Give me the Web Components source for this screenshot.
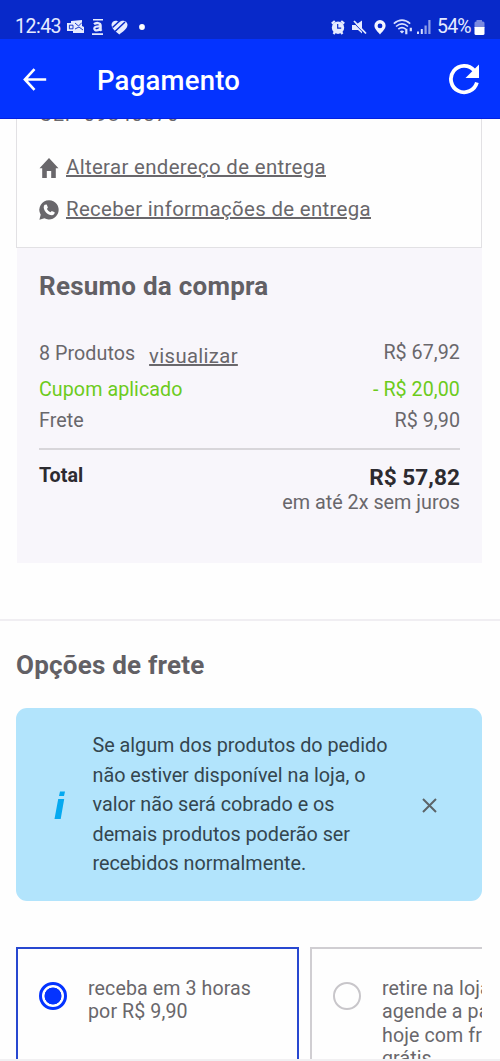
<!DOCTYPE html>
<html lang="pt-BR">
<head>
<meta charset="utf-8">
<title>Pagamento</title>
<style>
html,body{margin:0;height:100%}
body{font-family:Roboto,"Liberation Sans",sans-serif;background:#fefefe;color:#69676b;overflow:hidden}
</style>
</head>
<body>
<payment-screen></payment-screen>
<script>
const define = (name, html) => {
  const t = document.createElement('template');
  t.innerHTML = html;
  customElements.define(name, class extends HTMLElement {
    constructor() {
      super();
      this.attachShadow({mode: 'open'}).append(t.content.cloneNode(true));
    }
  });
};

define('status-bar', `<style>
:host{display:flex;box-sizing:border-box;height:39px;padding:14px 15px 0 15px;background:#0829c9;color:#e6ebff;font-size:19.5px;line-height:26px;justify-content:space-between}
div{display:flex;align-items:center;height:26px}
svg{display:block;flex:none}
.l span{width:46px;letter-spacing:-.5px;margin-right:6px}
.r span{letter-spacing:-.8px;width:37px;margin-left:6px}
</style>
<div class="l"><span>12:43</span>
<svg width="17" height="14" viewBox="0 0 17 14" fill="#e6ebff"><path d="M0 3h4V1l11-1v6l2 1v6H6v-2H0z"/><path d="M2.400 5.200h3.600v3.600h-3.600zM8 3l3.500 3L15 2.500M8 9l4-2 4 3" fill="none" stroke="#0829c9" stroke-width=".9"/></svg>
<svg width="12" height="18" viewBox="0 0 12 18" fill="#e6ebff" style="margin-left:7.500px"><path d="M1 1h10v1.500H1zM0 15.200h11V17H0z"/><path d="M2 6.200C4 4.400 8.600 4.500 8.600 7.500v4.200l1 1M8.300 8.500C4.600 8.200 2.300 8.800 2.300 10.600c0 2.600 4.600 2.300 6-.2" fill="none" stroke="#e6ebff" stroke-width="2.300"/></svg>
<svg width="17" height="15" viewBox="0 0 17 15" style="margin-left:7px"><path d="M8.300 14.500C5.500 12 .5 9 .5 4.800C.5 1 5.500-.8 8.300 2.300C11-.8 16.500 1 16.500 4.800C16.500 9 11.200 12 8.300 14.500z" fill="#e6ebff"/><path d="M1.500 7.500 8 1.500M4 11.500 14 2" stroke="#0829c9" stroke-width="1.500"/></svg>
<svg width="6" height="6" style="margin-left:11.500px"><circle cx="3" cy="3" r="2.900" fill="#fff"/></svg></div>
<div class="r">
<svg width="14" height="15" viewBox="0 0 14 15"><circle cx="7" cy="7.700" r="6.200" fill="#e6ebff"/><path d="M.8 3.600 3.800 1M13.200 3.600 10.200 1M2.500 14l1.500-2M11.500 14 10 12" stroke="#e6ebff" stroke-width="2.200"/><path d="M6.700 4v4.200h3.500" fill="none" stroke="#0829c9" stroke-width="1.200"/></svg>
<svg width="15" height="15" viewBox="0 0 15 15" style="margin-left:7px"><path d="M0 5h3.500L10 .5v13L6 10H0z" fill="#e6ebff"/><path d="M.8 1.800 13 14.300" stroke="#0829c9" stroke-width="1"/><path d="M2 1 14 13.500" stroke="#e6ebff" stroke-width="1.800"/></svg>
<svg width="12" height="15" viewBox="0 0 12 15" style="margin-left:7px"><path fill-rule="evenodd" d="M6 0a5.600 5.600 0 0 1 5.600 5.600C11.600 9 8.500 11.500 6 14.500 3.500 11.500.4 9 .4 5.600A5.600 5.600 0 0 1 6 0zm0 3.500a2.400 2.400 0 1 0 0 4.800 2.400 2.400 0 0 0 0-4.800z" fill="#f4f6ff"/></svg>
<svg width="20" height="16" viewBox="0 0 20 16" fill="none" stroke="#d8e0ff" stroke-width="1.600" style="margin-left:7px"><path d="M.8 4.600Q9 -2.500 17.200 4.600M3 7.500Q9 2.300 15 7.500M5.300 10.200Q9 7 12.700 10.200"/><path d="M6.800 12.400Q9 10.600 11.200 12.400L9 14.500z" fill="#d8e0ff" stroke="none"/><path d="M13.300 9.800v5.400M17.800 8.800v3.500" stroke-width="2.200"/></svg>
<svg width="14" height="14" viewBox="0 0 14 14" style="margin-left:4px"><path d="M0 11.500h2V14H0zM3.800 9h2v5h-2z" fill="#d8e0ff"/><path d="M7.500 5.500h2.200V14H7.500zM11.300 0h2.200v14h-2.200z" fill="#8f9fe8"/></svg>
<span>54%</span>
<svg width="11" height="15" viewBox="0 0 11 15"><path d="M2.500 0h5.500v1.500h1q1.500 0 1.500 1.500V8H.5V3q0-1.500 1.500-1.500h.5z" fill="#7888e0"/><path d="M.5 7h10v6.500q0 1.500-1.500 1.500H2Q.5 15 .5 13.500z" fill="#fff"/></svg>
</div>`);

define('app-bar', `<style>
:host{display:flex;box-sizing:border-box;height:80px;align-items:center;padding:0 20.500px 0 23px;background:#0433ff;color:#fff;border-bottom:1px solid #0420e0}
h1{margin:4px auto 0 50px;font-size:27.500px;font-weight:500;line-height:34px;letter-spacing:.22px}
svg{display:block;flex:none}
</style>
<svg width="24" height="24" viewBox="0 0 24 24" fill="none" stroke="#fff" stroke-width="2.600"><path d="M23.200 12.500H2M11.500 2.200 1.900 12.500 11.500 22.800"/></svg>
<h1><slot></slot></h1>
<svg width="32" height="32" viewBox="0 0 32 32"><path d="M26.200 7.500A13.200 13.200 0 1 0 28.900 19.500" fill="none" stroke="#fff" stroke-width="3.800"/><path d="M31 1.500v13.500H17.500z" fill="#fff"/></svg>`);

define('icon-link', `<style>
:host{display:flex;height:24px;line-height:24px;font-size:20.400px;letter-spacing:.34px}
.i{width:27px;flex:none}
a{text-decoration:underline;text-decoration-thickness:1.500px;text-underline-offset:1px;white-space:nowrap}
::slotted(svg){display:block;margin-top:3px}
</style><span class="i"><slot name="icon"></slot></span><a><slot></slot></a>`);

define('address-card', `<style>
:host{display:block;box-sizing:border-box;margin:-17px 18px 0 16px;height:145.500px;padding:0 22px;border:1.500px solid #e2e1e4;border-top:0;background:#fefefe}
p{margin:0 0 29px;font-size:20px;line-height:24px;letter-spacing:.7px}
icon-link + icon-link{margin-top:18px}
</style>
<p>CEP 09840370</p>
<icon-link><svg slot="icon" width="20" height="20" viewBox="0 0 20 20" fill="#69676b"><path d="M10 0 19.500 10.200H16.800V20H12.200V13H7.800V20H3.200V10.200H.5z"/></svg>Alterar endereço de entrega</icon-link>
<icon-link><svg slot="icon" width="20" height="20" viewBox="0 0 20 20"><path d="M10.200.2A9.600 9.600 0 1 1 5.400 18.200L.4 19.700 1.700 14.700A9.600 9.600 0 0 1 10.200.2z" fill="#69676b"/><path d="M5.700 4.800 7.700 4.600 8.900 7.600 7.900 8.900Q9.300 11.300 11.400 12.200L12.800 10.900 15.700 12.300Q15.600 15 12.900 15.200C8.600 15 5 11 4.700 7.400Q4.700 5.500 5.700 4.800z" fill="#fefefe"/></svg>Receber informações de entrega</icon-link>`);

define('summary-row', `<style>
:host{display:flex;justify-content:space-between;font-size:19.700px;line-height:24px;height:24px;white-space:nowrap;letter-spacing:.05px}
</style><span><slot></slot></span><span><slot name="value"></slot></span>`);

define('order-summary', `<style>
:host{display:block;box-sizing:border-box;height:315px;margin:0 18px 0 17px;padding:23px 22px 0;background:#f8f6fb}
h2{margin:0 0 40px;font-size:26px;line-height:30px;font-weight:700;letter-spacing:.24px;color:#626065}
.view{text-decoration:underline;text-decoration-thickness:1.500px;text-underline-offset:1px;font-size:20.300px;letter-spacing:.35px;margin-left:9px;position:relative;top:3px}
.green{color:#6ccb1c;margin-top:13px}
.ship{margin-top:7px}
hr{border:0;height:2px;background:#d8d6da;margin:15px 0 14px}
.total{color:#2d2b30;font-weight:700}
.big{font-size:22.600px;position:relative;top:2px}
.note{margin:3px 0 0;text-align:right;font-size:19.800px;line-height:24px}
</style>
<h2>Resumo da compra</h2>
<summary-row>8 Produtos <span class="view">visualizar</span><span slot="value">R$ 67,92</span></summary-row>
<summary-row class="green">Cupom aplicado<span slot="value">- R$ 20,00</span></summary-row>
<summary-row class="ship">Frete<span slot="value">R$ 9,90</span></summary-row>
<hr>
<summary-row class="total">Total<span slot="value" class="big">R$ 57,82</span></summary-row>
<p class="note">em até 2x sem juros</p>`);

define('info-notice', `<style>
:host{display:grid;grid-template-columns:76.500px 1fr 30px;align-items:center;box-sizing:border-box;height:193px;margin:0 18px 0 16px;padding:1px 37px 0 0;border-radius:11px;background:#b2e4fc;color:#34464f}
p{margin:0;font-size:19.800px;line-height:29.600px;white-space:nowrap;letter-spacing:-.02px}
svg{display:block}
</style>
<svg width="12" height="30" viewBox="0 0 12 30" style="margin-left:37.500px" fill="#05a9f0"><path d="M6 1.500h5l-1 4.500H5zM4.200 9h6L6.700 29H.5z"/></svg>
<p><slot></slot></p>
<svg width="15" height="15" viewBox="0 0 15 15" stroke="#5c6468" stroke-width="2" style="margin-left:7px"><path d="M1 1 14 14M14 1 1 14"/></svg>`);

define('shipping-option', `<style>
:host{display:flex;box-sizing:border-box;flex:none;width:283px;height:200px;border:2px solid #d0ced2;padding:28px 20px 0;font-size:19.600px;line-height:23.300px;white-space:nowrap;letter-spacing:.1px}
:host([checked]){border-color:#2848d0}
i{box-sizing:border-box;width:28px;height:28px;border-radius:50%;border:2px solid #c8c6ca;margin:5px 21px 0 1px;flex:none}
:host([checked]) i{border:3px solid #0433ff;background:radial-gradient(circle,#0433ff 8.200px,#fefefe 8.800px)}
</style><i></i><span><slot></slot></span>`);

define('payment-screen', `<style>
:host{display:flex;flex-direction:column;height:1061px}
main{flex:1;min-height:0;overflow:hidden}
hr{border:0;height:2px;margin:56.500px 0 0;background:#f0eef2}
h2{margin:29px 0 28px 16px;font-size:26px;line-height:30px;font-weight:700;letter-spacing:.22px;color:#626065}
.options{display:flex;gap:11px;margin:46px 18px 0 16px;overflow:hidden}
footer{height:2px;background:#f1f0f2}
</style>
<status-bar></status-bar>
<app-bar>Pagamento</app-bar>
<main>
<address-card></address-card>
<order-summary></order-summary>
<hr>
<h2>Opções de frete</h2>
<info-notice>Se algum dos produtos do pedido<br>não estiver disponível na loja, o<br>valor não será cobrado e os<br>demais produtos poderão ser<br>recebidos normalmente.</info-notice>
<div class="options">
<shipping-option checked>receba em 3 horas<br>por R$ 9,90</shipping-option>
<shipping-option>retire na loja e<br>agende a partir de<br>hoje com frete<br>grátis</shipping-option>
</div>
</main>
<footer></footer>`);
</script>
</body>
</html>
